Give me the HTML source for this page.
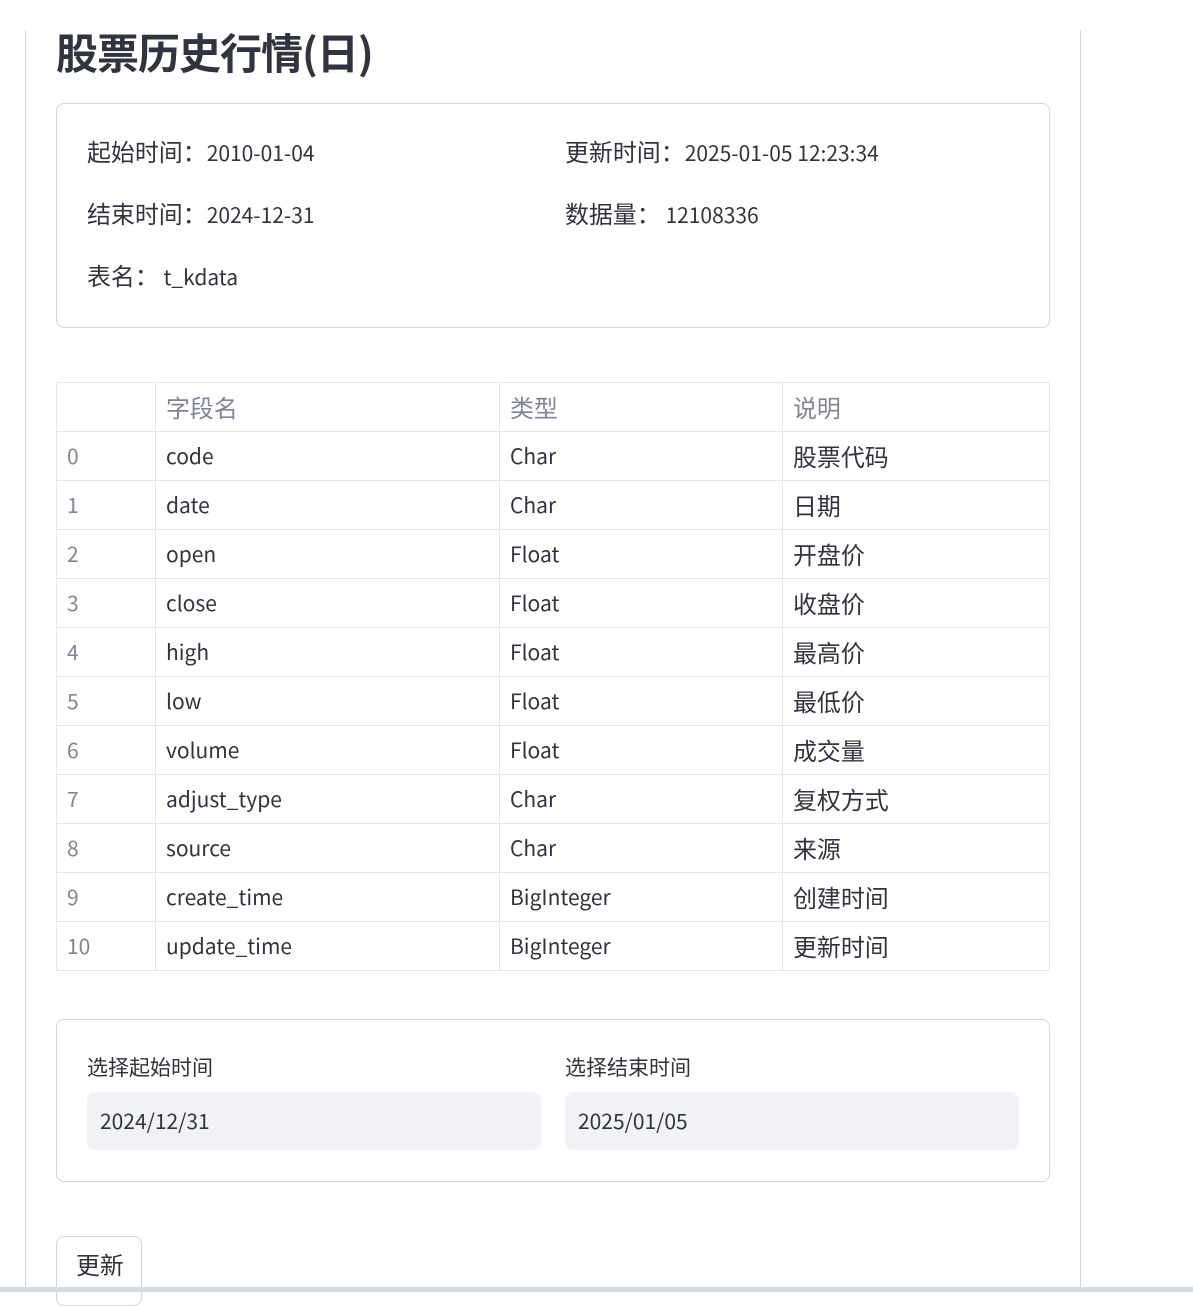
<!DOCTYPE html>
<html><head><meta charset="utf-8"><style>
*{box-sizing:border-box;margin:0;padding:0}
body{width:1193px;height:1292px;background:#fff;font-family:"Noto Sans CJK SC","Liberation Sans",sans-serif;color:#31333f;position:relative;overflow:hidden}
.c{font-size:1.14em;line-height:1}
.vl{position:absolute;top:30px;width:1px;background:#d6d6d9}
h1{position:absolute;left:56px;top:22px;font-size:42px;font-weight:700;line-height:60px;letter-spacing:-1px}
.box{position:absolute;left:56px;width:994px;border:1px solid #d3d4d8;border-radius:8px}
.t{position:absolute;font-size:21px;line-height:30px;white-space:nowrap}
table{position:absolute;left:56px;top:382px;width:994px;border-collapse:collapse;font-size:21px}
td{border:1px solid #e6e7ea;height:49px;padding:0 10px;vertical-align:middle;white-space:nowrap;line-height:1}
tr td:first-child{color:#808495}
tr.h td{color:#808495}
.inp{position:absolute;top:1092px;width:454px;height:58px;background:#f0f2f6;border-radius:8px;font-size:21px;line-height:58px;padding-left:13px}
.lbl{position:absolute;top:1052px;font-size:19px;line-height:30px}
.btn{position:absolute;left:56px;top:1236px;width:86px;height:70px;border:1px solid #d3d4d8;border-radius:8px;font-size:21px;padding:14px 0 0 19px}
.bot{position:absolute;left:0;top:1287px;width:1193px;height:5px;background:#d4dce6;z-index:5}
</style></head><body>
<div class="vl" style="left:25px;height:1262px"></div>
<div class="vl" style="left:1080px;height:1262px"></div>
<h1>股票历史行情(日)</h1>
<div class="box" style="top:103px;height:225px"></div>
<div class="t" style="left:87px;top:138px"><span class="c">起始时间：</span>2010-01-04</div>
<div class="t" style="left:565px;top:138px"><span class="c">更新时间：</span>2025-01-05 12:23:34</div>
<div class="t" style="left:87px;top:200px"><span class="c">结束时间：</span>2024-12-31</div>
<div class="t" style="left:565px;top:200px"><span class="c">数据量：</span>&nbsp;12108336</div>
<div class="t" style="left:87px;top:262px"><span class="c">表名：</span>&nbsp;t_kdata</div>
<table>
<colgroup><col style="width:99px"><col style="width:344px"><col style="width:283px"><col></colgroup>
<tr class="h"><td></td><td><span class="c">字段名</span></td><td><span class="c">类型</span></td><td><span class="c">说明</span></td></tr>
<tr><td>0</td><td>code</td><td>Char</td><td><span class="c">股票代码</span></td></tr>
<tr><td>1</td><td>date</td><td>Char</td><td><span class="c">日期</span></td></tr>
<tr><td>2</td><td>open</td><td>Float</td><td><span class="c">开盘价</span></td></tr>
<tr><td>3</td><td>close</td><td>Float</td><td><span class="c">收盘价</span></td></tr>
<tr><td>4</td><td>high</td><td>Float</td><td><span class="c">最高价</span></td></tr>
<tr><td>5</td><td>low</td><td>Float</td><td><span class="c">最低价</span></td></tr>
<tr><td>6</td><td>volume</td><td>Float</td><td><span class="c">成交量</span></td></tr>
<tr><td>7</td><td>adjust_type</td><td>Char</td><td><span class="c">复权方式</span></td></tr>
<tr><td>8</td><td>source</td><td>Char</td><td><span class="c">来源</span></td></tr>
<tr><td>9</td><td>create_time</td><td>BigInteger</td><td><span class="c">创建时间</span></td></tr>
<tr><td>10</td><td>update_time</td><td>BigInteger</td><td><span class="c">更新时间</span></td></tr>
</table>
<div class="box" style="top:1019px;height:163px"></div>
<div class="lbl" style="left:87px;font-size:21px">选择起始时间</div>
<div class="lbl" style="left:565px;font-size:21px">选择结束时间</div>
<div class="inp" style="left:87px">2024/12/31</div>
<div class="inp" style="left:565px">2025/01/05</div>
<div class="btn"><span class="c">更新</span></div>
<div class="bot"></div>
</body></html>
